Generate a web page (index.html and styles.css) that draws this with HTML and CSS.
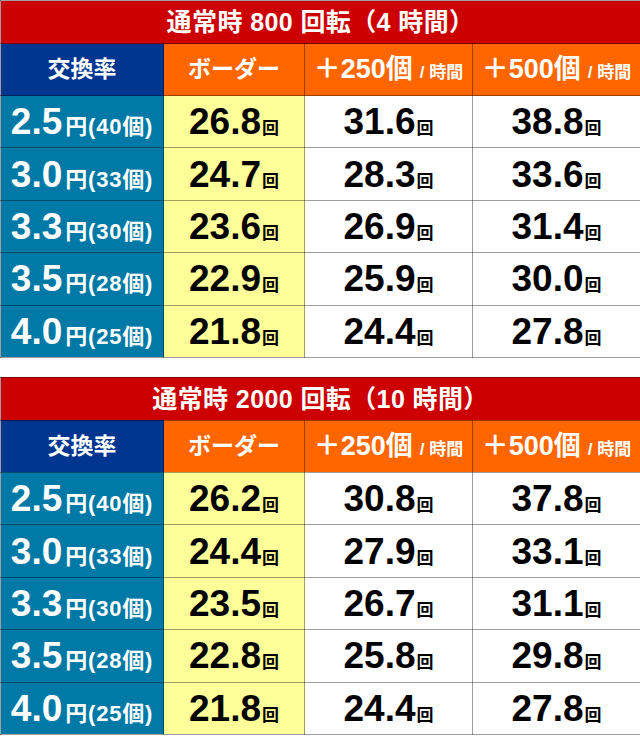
FILE: index.html
```html
<!DOCTYPE html>
<html lang="ja">
<head>
<meta charset="utf-8">
<title>ボーダー表</title>
<link rel="stylesheet" href="styles.css">
</head>
<body>
<div class="page">
  <table class="rate-table">
    <colgroup><col class="c1"><col class="c2"><col class="c3"><col class="c4"></colgroup>
    <tr class="title-row"><th colspan="4">通常時 800 回転（4 時間）</th></tr>
    <tr class="head-row">
      <th class="h-rate">交換率</th>
      <th class="h-orange">ボーダー</th>
      <th class="h-orange">＋250個<span class="per">/ 時間</span></th>
      <th class="h-orange">＋500個<span class="per">/ 時間</span></th>
    </tr>
    <tr><td class="rate"><span class="big">2.5</span><span class="unit">円(40個)</span></td><td class="bd"><span class="num">26.8</span><span class="kai">回</span></td><td><span class="num">31.6</span><span class="kai">回</span></td><td><span class="num">38.8</span><span class="kai">回</span></td></tr>
    <tr><td class="rate"><span class="big">3.0</span><span class="unit">円(33個)</span></td><td class="bd"><span class="num">24.7</span><span class="kai">回</span></td><td><span class="num">28.3</span><span class="kai">回</span></td><td><span class="num">33.6</span><span class="kai">回</span></td></tr>
    <tr><td class="rate"><span class="big">3.3</span><span class="unit">円(30個)</span></td><td class="bd"><span class="num">23.6</span><span class="kai">回</span></td><td><span class="num">26.9</span><span class="kai">回</span></td><td><span class="num">31.4</span><span class="kai">回</span></td></tr>
    <tr><td class="rate"><span class="big">3.5</span><span class="unit">円(28個)</span></td><td class="bd"><span class="num">22.9</span><span class="kai">回</span></td><td><span class="num">25.9</span><span class="kai">回</span></td><td><span class="num">30.0</span><span class="kai">回</span></td></tr>
    <tr><td class="rate"><span class="big">4.0</span><span class="unit">円(25個)</span></td><td class="bd"><span class="num">21.8</span><span class="kai">回</span></td><td><span class="num">24.4</span><span class="kai">回</span></td><td><span class="num">27.8</span><span class="kai">回</span></td></tr>
  </table>

  <table class="rate-table">
    <colgroup><col class="c1"><col class="c2"><col class="c3"><col class="c4"></colgroup>
    <tr class="title-row"><th colspan="4">通常時 2000 回転（10 時間）</th></tr>
    <tr class="head-row">
      <th class="h-rate">交換率</th>
      <th class="h-orange">ボーダー</th>
      <th class="h-orange">＋250個<span class="per">/ 時間</span></th>
      <th class="h-orange">＋500個<span class="per">/ 時間</span></th>
    </tr>
    <tr><td class="rate"><span class="big">2.5</span><span class="unit">円(40個)</span></td><td class="bd"><span class="num">26.2</span><span class="kai">回</span></td><td><span class="num">30.8</span><span class="kai">回</span></td><td><span class="num">37.8</span><span class="kai">回</span></td></tr>
    <tr><td class="rate"><span class="big">3.0</span><span class="unit">円(33個)</span></td><td class="bd"><span class="num">24.4</span><span class="kai">回</span></td><td><span class="num">27.9</span><span class="kai">回</span></td><td><span class="num">33.1</span><span class="kai">回</span></td></tr>
    <tr><td class="rate"><span class="big">3.3</span><span class="unit">円(30個)</span></td><td class="bd"><span class="num">23.5</span><span class="kai">回</span></td><td><span class="num">26.7</span><span class="kai">回</span></td><td><span class="num">31.1</span><span class="kai">回</span></td></tr>
    <tr><td class="rate"><span class="big">3.5</span><span class="unit">円(28個)</span></td><td class="bd"><span class="num">22.8</span><span class="kai">回</span></td><td><span class="num">25.8</span><span class="kai">回</span></td><td><span class="num">29.8</span><span class="kai">回</span></td></tr>
    <tr><td class="rate"><span class="big">4.0</span><span class="unit">円(25個)</span></td><td class="bd"><span class="num">21.8</span><span class="kai">回</span></td><td><span class="num">24.4</span><span class="kai">回</span></td><td><span class="num">27.8</span><span class="kai">回</span></td></tr>
  </table>
</div>
</body>
</html>
```

FILE: styles.css
```css
html, body {
  margin: 0;
  padding: 0;
  background: #ffffff;
}

.page {
  width: 640px;
  display: flex;
  flex-direction: column;
  gap: 19px;
  font-family: "Liberation Sans", "Noto Sans CJK JP", sans-serif;
  font-weight: bold;
}

.rate-table {
  width: 640px;
  table-layout: fixed;
  border-collapse: collapse;
  border-spacing: 0;
}

.c1 { width: 163px; }
.c2 { width: 141px; }
.c3 { width: 168px; }
.c4 { width: 168px; }

.rate-table th,
.rate-table td {
  border: 1px solid rgba(0, 0, 0, 0.38);
  padding: 0;
  text-align: center;
  vertical-align: middle;
  white-space: nowrap;
  line-height: 1;
}

.title-row { height: 43px; }
.title-row th {
  background: #cc0000;
  color: #ffffff;
  font-size: 25px;
  letter-spacing: 0.4px;
  padding-top: 1px;
}

.head-row { height: 52px; }
.head-row th {
  color: #ffffff;
  font-size: 23px;
}
.h-rate { background: #00368f; }
.h-orange { background: #ff6600; }
.h-orange:nth-child(n+3) { font-size: 27px; }

.per {
  font-size: 17px;
  margin-left: 7px;
}

.rate-table tr:nth-child(n+3) { height: 52.4px; }

td {
  background: #ffffff;
  color: #000000;
}
td.rate {
  background: #0079a6;
  color: #ffffff;
}
td.bd { background: #ffff99; }

.big,
.num {
  font-size: 37px;
}

.unit {
  font-size: 22px;
  margin-left: 3px;
  letter-spacing: 0.8px;
}

.kai {
  font-size: 17px;
  margin-left: 1px;
}
```
